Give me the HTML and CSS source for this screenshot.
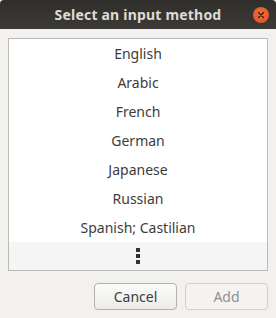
FILE: index.html
```html
<!DOCTYPE html>
<html>
<head>
<meta charset="utf-8">
<link rel="stylesheet" href="styles.css">
</head>
<body>
<div class="dialog">
  <header class="titlebar">
    <span class="title">Select an input method</span>
    <span class="close"><svg width="16" height="16" viewBox="0 0 16 16"><path d="M5.5 5.5 L10.5 10.5 M10.5 5.5 L5.5 10.5" stroke="#3a2218" stroke-width="1.4" stroke-linecap="round"/></svg></span>
  </header>
  <main class="content">
    <div class="list">
      <div class="row">English</div>
      <div class="row">Arabic</div>
      <div class="row">French</div>
      <div class="row">German</div>
      <div class="row">Japanese</div>
      <div class="row">Russian</div>
      <div class="row">Spanish; Castilian</div>
      <div class="more"><span class="dot"></span><span class="dot"></span><span class="dot"></span></div>
    </div>
    <div class="actions">
      <button class="btn">Cancel</button>
      <button class="btn disabled">Add</button>
    </div>
  </main>
</div>
</body>
</html>
```
FILE: styles.css
```css
html, body {
  margin: 0;
  padding: 0;
}
body {
  width: 276px;
  height: 318px;
  background: #f2f1f0;
  font-family: "Noto Sans", "DejaVu Sans", sans-serif;
  overflow: hidden;
}
.dialog {
  display: flex;
  flex-direction: column;
  height: 318px;
}
.titlebar {
  height: 29px;
  background: linear-gradient(#2f2e2b, #3b3a36);
  display: flex;
  align-items: center;
  justify-content: center;
  position: relative;
  border-radius: 4px 4px 0 0;
}
.title {
  color: #dfdbd2;
  font-weight: bold;
  font-size: 14px;
  letter-spacing: 0.2px;
}
.close {
  position: absolute;
  right: 7px;
  top: 7px;
  width: 16px;
  height: 16px;
  border-radius: 50%;
  background: radial-gradient(circle at 50% 40%, #f26d3d, #e0501f);
  display: flex;
}
.content {
  flex: 1;
  padding: 9px 8px 0 8px;
  display: flex;
  flex-direction: column;
}
.list {
  border: 1px solid #bdb9b5;
  background: #ffffff;
  display: flex;
  flex-direction: column;
}
.row {
  height: 29px;
  display: flex;
  align-items: center;
  justify-content: center;
  font-size: 14px;
  color: #3c3c3c;
}
.more {
  height: 28px;
  background: #f5f5f5;
  display: flex;
  flex-direction: column;
  align-items: center;
  justify-content: center;
  gap: 2px;
}
.dot {
  width: 4px;
  height: 4px;
  background: #333333;
}
.actions {
  display: flex;
  justify-content: flex-end;
  gap: 8px;
  margin-top: 12px;
}
.btn {
  width: 83px;
  height: 27px;
  border: 1px solid #b4b1ad;
  border-radius: 4px;
  background: linear-gradient(#fbfbfa, #edeceb);
  font-family: "Noto Sans", "DejaVu Sans", sans-serif;
  font-size: 14px;
  color: #3c3c3c;
  padding: 0;
}
.btn.disabled {
  width: 83px;
  background: #f4f3f2;
  border-color: #d2cfcb;
  color: #8e9192;
}
```
